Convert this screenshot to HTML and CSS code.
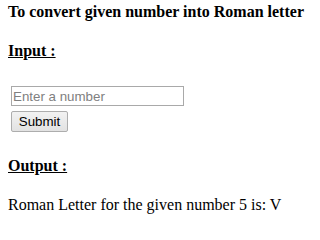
FILE: index.html
```html
<!DOCTYPE html>
<html>
<head>
<meta charset="utf-8">
<title>Roman letter</title>
<link rel="stylesheet" href="styles.css">
</head>
<body>
<h4 class="title">To convert given number into Roman letter</h4>
<h4 class="section">Input :</h4>
<form class="form">
  <input class="num-input" type="text" placeholder="Enter a number">
  <button class="submit-btn" type="button">Submit</button>
</form>
<h4 class="section output">Output :</h4>
<p class="result">Roman Letter for the given number 5 is: V</p>
</body>
</html>
```
FILE: styles.css
```css
body {
  margin: 3px 8px 0;
  font-family: "Liberation Serif", "Times New Roman", serif;
  font-size: 16px;
  color: #000;
  background: #fff;
}
.title {
  margin: 0 0 21px;
  font-size: 16px;
  font-weight: bold;
}
.section {
  margin: 0;
  font-size: 16px;
  font-weight: bold;
  text-decoration: underline;
}
.form {
  display: flex;
  flex-direction: column;
  align-items: flex-start;
  gap: 5px;
  margin: 26px 0 0;
  padding-left: 3px;
}
.num-input {
  box-sizing: border-box;
  width: 173px;
  height: 20px;
  margin: 0;
  padding: 0 1px;
  border: 1px solid #a9a9a9;
  border-radius: 0;
  font-family: "Liberation Sans", Arial, sans-serif;
  font-size: 13.33px;
  color: #000;
  background: #fff;
  outline: none;
}
.num-input::placeholder {
  color: #808080;
}
.submit-btn {
  box-sizing: border-box;
  width: 57px;
  height: 21px;
  margin: 0;
  padding: 0;
  border: 1px solid #adadad;
  border-radius: 2px;
  background: linear-gradient(#f2f2f2, #e2e2e2);
  font-family: "Liberation Sans", Arial, sans-serif;
  font-size: 13.33px;
  color: #000;
}
.output {
  margin: 25px 0 21px;
}
.result {
  margin: 0;
}
```
